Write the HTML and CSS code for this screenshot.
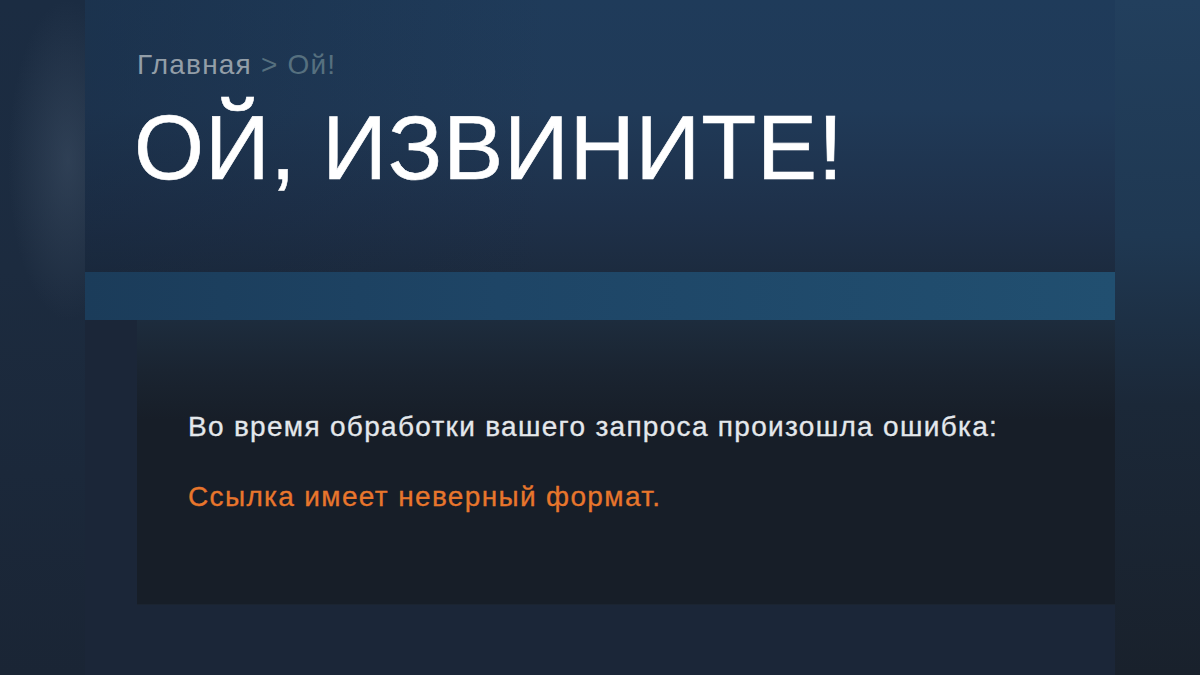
FILE: index.html
```html
<!DOCTYPE html>
<html lang="ru">
<head>
<meta charset="utf-8">
<title>Ой, извините!</title>
<link rel="stylesheet" href="styles.css">
</head>
<body>
<div class="page">
  <div class="side side-left"></div>
  <main class="column">
    <header class="header">
      <div class="breadcrumbs"><span class="crumb-home">Главная</span> <span class="crumb-sep">&gt;</span> <span class="crumb-cur">Ой!</span></div>
      <h1 class="title">ОЙ, ИЗВИНИТЕ!</h1>
    </header>
    <div class="band"></div>
    <section class="content">
      <div class="panel">
        <p class="msg">Во время обработки вашего запроса произошла ошибка:</p>
        <p class="err">Ссылка имеет неверный формат.</p>
      </div>
    </section>
  </main>
  <div class="side side-right"></div>
</div>
</body>
</html>
```

FILE: styles.css
```css
html, body {
  margin: 0;
  padding: 0;
  height: 100%;
}
body {
  background: #1b2738;
  font-family: "Liberation Sans", Arial, sans-serif;
  overflow: hidden;
}
.page {
  display: flex;
  width: 1200px;
  height: 675px;
}
.side-left {
  width: 85px;
  flex: none;
  background:
    radial-gradient(ellipse 60px 160px at 68px 160px, rgba(70, 88, 110, 0.45), rgba(70, 88, 110, 0) 100%),
    linear-gradient(180deg, #1b2c42 0%, #1c2b3f 40%, #1a2535 100%);
}
.side-right {
  flex: 1;
  background: linear-gradient(180deg, #223f5d 0%, #1f3852 35%, #1b2838 60%, #19212c 100%);
}
.column {
  width: 1030px;
  flex: none;
  display: flex;
  flex-direction: column;
  background: #1b2638;
}
.header {
  height: 272px;
  box-sizing: border-box;
  padding: 49px 0 0 52px;
  background:
    linear-gradient(90deg, rgba(20, 35, 55, 0.35) 0%, rgba(20, 35, 55, 0) 45%),
    linear-gradient(180deg, #1f3b5a 0%, #203a58 40%, #1e3049 80%, #1c2b3f 100%);
}
.breadcrumbs {
  font-size: 28px;
  line-height: 32px;
  letter-spacing: 1.2px;
  color: #56707f;
}
.crumb-home {
  color: #939ea8;
}
.title {
  margin: 15px 0 0 -3px;
  font-family: "Liberation Sans", Arial, sans-serif;
  font-weight: normal;
  font-size: 90px;
  line-height: 104px;
  letter-spacing: 0.9px;
  color: #ffffff;
  -webkit-text-stroke: 0.6px #ffffff;
}
.band {
  height: 48px;
  background: linear-gradient(90deg, #1b3c5a 0%, #1e4566 40%, #214f70 100%);
}
.content {
  flex: 1;
  padding: 0 0 0 52px;
}
.panel {
  height: 285px;
  box-sizing: border-box;
  padding: 89px 0 0 51px;
  background: linear-gradient(180deg, #1d2c3d 0%, #1a2431 18%, #171e28 35%, #171e28 100%);
  box-shadow: inset 0 -1px 0 rgba(30, 40, 55, 0.6);
}
.msg {
  margin: 0;
  font-size: 28px;
  line-height: 36px;
  letter-spacing: 1.3px;
  color: #e4e8ec;
  -webkit-text-stroke: 0.3px #e4e8ec;
}
.err {
  margin: 34px 0 0 0;
  font-size: 28px;
  line-height: 36px;
  letter-spacing: 1.35px;
  color: #e8762c;
  -webkit-text-stroke: 0.3px #e8762c;
}
```
